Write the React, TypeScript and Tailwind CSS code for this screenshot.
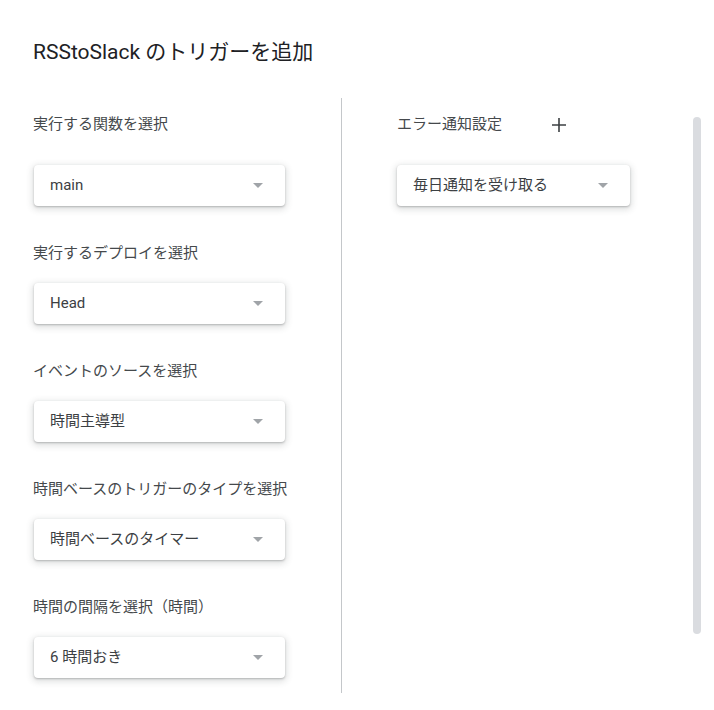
function Arrow() {
  return (
    <svg width="10" height="5" viewBox="0 0 10 5" className="shrink-0">
      <path d="M0 0 L10 0 L5 5 Z" fill="#a0a4a8" />
    </svg>
  );
}

function Select({ value, width }: { value: string; width: string }) {
  return (
    <div
      className={`${width} h-[41px] flex items-center justify-between pl-[16px] pr-[22px] bg-white rounded-[4px] shadow-[0_1px_2px_rgba(60,64,67,0.3),0_2px_6px_2px_rgba(60,64,67,0.15)] text-[15px] text-[#3c4043]`}
    >
      <span>{value}</span>
      <Arrow />
    </div>
  );
}

const fields = [
  { label: "実行する関数を選択", value: "main" },
  { label: "実行するデプロイを選択", value: "Head" },
  { label: "イベントのソースを選択", value: "時間主導型" },
  { label: "時間ベースのトリガーのタイプを選択", value: "時間ベースのタイマー" },
  { label: "時間の間隔を選択（時間）", value: "6 時間おき" },
];

export default function App() {
  return (
    <div className="w-[714px] h-[710px] bg-white overflow-hidden font-['Roboto','Noto_Sans_CJK_JP',sans-serif]">
      <div className="pl-[33px] pt-[38px]">
        <h1 className="text-[21px] leading-[28px] text-[#202124]">
          RSStoSlack のトリガーを追加
        </h1>
      </div>
      <div className="flex mt-[32px]">
        <div className="w-[341px] pl-[33px] pt-[16px] flex flex-col">
          {fields.map((f, i) => (
            <div key={i} className={i > 0 ? "mt-[37px]" : ""}>
              <div className="text-[15px] leading-[20px] text-[#45494c]">{f.label}</div>
              <div className={`${i === 0 ? "mt-[31px]" : "mt-[20px]"} pl-px`}>
                <Select value={f.value} width="w-[251px]" />
              </div>
            </div>
          ))}
        </div>
        <div className="w-px h-[595px] bg-[#c4c7ca]" />
        <div className="flex-1 pl-[55px] pt-[16px]">
          <div className="flex items-center h-[20px]">
            <span className="text-[15px] leading-[20px] text-[#45494c]">エラー通知設定</span>
            <svg width="14" height="14" viewBox="0 0 14 14" className="ml-[50px] mt-[2px]">
              <path d="M7 0 V14 M0 7 H14" stroke="#3c4043" strokeWidth="1.6" />
            </svg>
          </div>
          <div className="mt-[31px]">
            <Select value="毎日通知を受け取る" width="w-[233px]" />
          </div>
        </div>
        <div className="w-[8px] h-[517px] mt-[19px] mr-[13px] rounded-full bg-[#dadce0]" />
      </div>
    </div>
  );
}
